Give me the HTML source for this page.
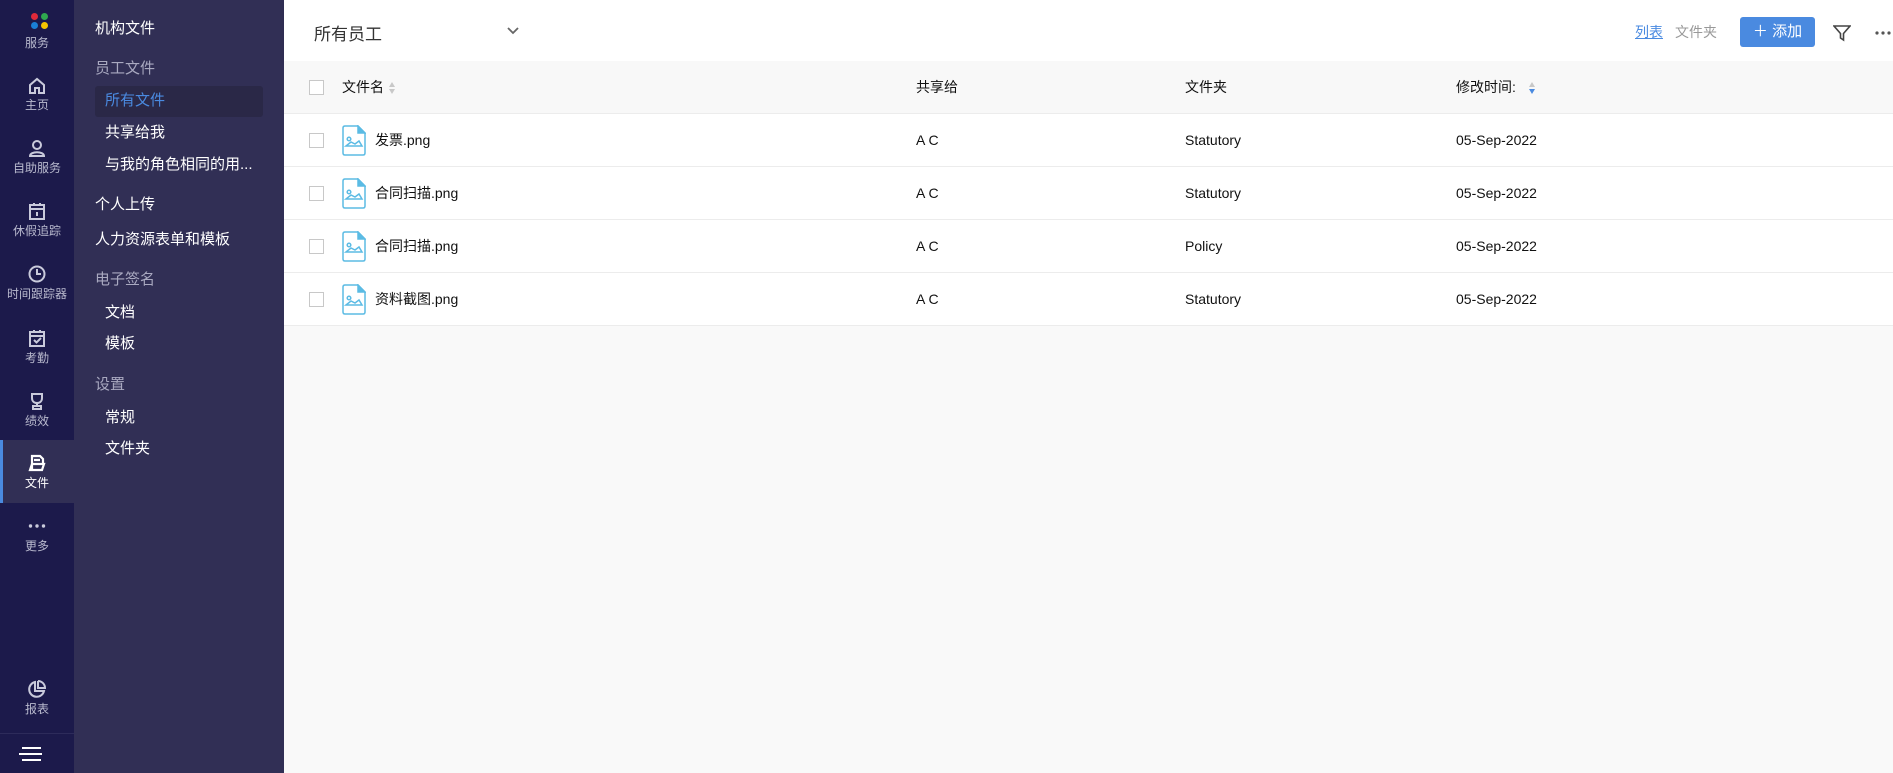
<!DOCTYPE html>
<html><head><meta charset="utf-8"><style>
*{margin:0;padding:0;box-sizing:border-box}
body{width:1893px;height:773px;overflow:hidden;background:#f9f9f9;font-family:"Liberation Sans","Noto Sans CJK SC",sans-serif;position:relative}
.rail{position:absolute;left:0;top:0;width:74px;height:773px;background:#1c1a4b}
.sub{position:absolute;left:74px;top:0;width:210px;height:773px;background:#312f55}
.ri{position:absolute;left:0;width:74px;text-align:center;color:#b9bace;font-size:12px}
.ri svg{position:absolute;left:27px}
.ri span{position:absolute;left:0;width:74px;text-align:center}
.s{position:absolute;font-size:15px;color:#fff;white-space:nowrap;line-height:20px}
.s.h{color:#a9a9c0}
.main{position:absolute;left:284px;top:0;right:0;height:773px}
.top{position:absolute;left:0;top:0;right:0;height:61px;background:#fff;box-shadow:0 1px 4px rgba(0,0,0,.1)}
.row{position:absolute;left:0;right:0;height:53px;background:#fff;border-bottom:1px solid #ececec;font-size:14px;color:#111}
.row.hd{background:#f8f8f8}
.c{position:absolute;top:50%;transform:translateY(-50%);white-space:nowrap}
.cb{position:absolute;left:25px;top:19px;width:15px;height:15px;border:1.5px solid #c8c8c8;background:#fff}
.srt{display:inline-block;vertical-align:middle;margin-left:4px}
</style></head><body>
<div class="rail">
  <div style="position:absolute;left:31px;top:13px;width:7px;height:7px;border-radius:50%;background:#e02a3a"></div>
  <div style="position:absolute;left:41px;top:13px;width:7px;height:7px;border-radius:50%;background:#2fa84f"></div>
  <div style="position:absolute;left:31px;top:22px;width:7px;height:7px;border-radius:50%;background:#1a7fd6"></div>
  <div style="position:absolute;left:41px;top:22px;width:7px;height:7px;border-radius:50%;background:#f5c400"></div>
  <div class="ri" style="top:34px"><span>服务</span></div>

  <div class="ri" style="top:76px"><svg width="20" height="20" viewBox="0 0 20 20" fill="none" stroke="#c9cadb" stroke-width="2"><path d="M3 9 L10 3 L17 9 V17 H12 V12 H8 V17 H3 Z"/></svg><span style="top:20px">主页</span></div>
  <div class="ri" style="top:138px"><svg width="20" height="20" viewBox="0 0 20 20" fill="none" stroke="#c9cadb" stroke-width="2"><circle cx="10" cy="7" r="4"/><path d="M3 18 C3 13 17 13 17 18 Z"/></svg><span style="top:21px">自助服务</span></div>
  <div class="ri" style="top:201px"><svg width="20" height="20" viewBox="0 0 20 20" fill="none" stroke="#c9cadb" stroke-width="2"><rect x="3" y="4" width="14" height="14"/><path d="M3 8H17M7 2V5M13 2V5M10 11V15"/></svg><span style="top:21px">休假追踪</span></div>
  <div class="ri" style="top:264px"><svg width="20" height="20" viewBox="0 0 20 20" fill="none" stroke="#c9cadb" stroke-width="2"><circle cx="10" cy="10" r="7.5"/><path d="M10 5V10H14"/></svg><span style="top:21px">时间跟踪器</span></div>
  <div class="ri" style="top:328px"><svg width="20" height="20" viewBox="0 0 20 20" fill="none" stroke="#c9cadb" stroke-width="2"><rect x="3" y="4" width="14" height="14"/><path d="M3 8H17M7 2V5M13 2V5M7 12L9.5 14.5L14 10"/></svg><span style="top:21px">考勤</span></div>
  <div class="ri" style="top:391px"><svg width="20" height="20" viewBox="0 0 20 20" fill="none" stroke="#c9cadb" stroke-width="2"><path d="M5 3H15V7C15 10 13 12 10 12C7 12 5 10 5 7Z M10 12V15 M6 18H14V15H6Z"/></svg><span style="top:21px">绩效</span></div>
  <div style="position:absolute;left:0;top:440px;width:74px;height:63px;background:#312f55;border-left:3px solid #4a8ae0"></div>
  <div class="ri" style="top:453px;color:#fff"><svg width="20" height="20" viewBox="0 0 20 20" fill="none" stroke="#fff" stroke-width="2.2"><path d="M5 17V3H13L16 6V10M3 17H15L17 11H5Z M7 7H13"/></svg><span style="top:21px">文件</span></div>
  <div class="ri" style="top:516px"><svg width="20" height="20" viewBox="0 0 20 20" fill="#c9cadb"><circle cx="3.5" cy="10" r="1.7"/><circle cx="10" cy="10" r="1.7"/><circle cx="16.5" cy="10" r="1.7"/></svg><span style="top:21px">更多</span></div>
  <div class="ri" style="top:679px"><svg width="20" height="20" viewBox="0 0 20 20" fill="none" stroke="#c9cadb" stroke-width="2"><path d="M8 3A7.5 7.5 0 1 0 17 12H8Z M11 2V9H18A7 7 0 0 0 11 2"/></svg><span style="top:21px">报表</span></div>
  <div style="position:absolute;left:0;top:733px;width:74px;height:1px;background:#2d2b5a"></div>
  <div style="position:absolute;left:22px;top:747px;width:19px;height:2px;background:#fff"></div>
  <div style="position:absolute;left:19px;top:753px;width:23px;height:2px;background:#fff"></div>
  <div style="position:absolute;left:22px;top:759px;width:19px;height:2px;background:#fff"></div>
</div>
<div class="sub">
  <div style="position:absolute;left:21px;top:86px;width:168px;height:31px;background:#2a2847;border-radius:3px"></div>
  <div class="s" style="left:21px;top:19px">机构文件</div>
  <div class="s h" style="left:21px;top:59px">员工文件</div>
  <div class="s" style="left:31px;top:91px;color:#4a8ae0">所有文件</div>
  <div class="s" style="left:31px;top:123px">共享给我</div>
  <div class="s" style="left:31px;top:155px">与我的角色相同的用...</div>
  <div class="s" style="left:21px;top:195px">个人上传</div>
  <div class="s" style="left:21px;top:230px">人力资源表单和模板</div>
  <div class="s h" style="left:21px;top:270px">电子签名</div>
  <div class="s" style="left:31px;top:303px">文档</div>
  <div class="s" style="left:31px;top:334px">模板</div>
  <div class="s h" style="left:21px;top:375px">设置</div>
  <div class="s" style="left:31px;top:408px">常规</div>
  <div class="s" style="left:31px;top:439px">文件夹</div>
</div>
<div class="main">
  <div class="top">
    <div style="position:absolute;left:30px;top:20px;font-size:17px;color:#333">所有员工</div>
    <svg style="position:absolute;left:223px;top:27px" width="12" height="8" viewBox="0 0 12 8" fill="none" stroke="#666" stroke-width="1.8"><path d="M1 1L6 6L11 1"/></svg>
    <div style="position:absolute;left:1351px;top:22px;font-size:14px;color:#4a8ae0;text-decoration:underline">列表</div>
    <div style="position:absolute;left:1391px;top:22px;font-size:14px;color:#999">文件夹</div>
    <div style="position:absolute;left:1456px;top:17px;width:75px;height:30px;background:#4a8ae0;border-radius:3px;color:#fff;font-size:15px;line-height:30px;text-align:center">＋ 添加</div>
    <svg style="position:absolute;left:1549px;top:24px" width="18" height="18" viewBox="0 0 18 18" fill="none" stroke="#444" stroke-width="1.6"><path d="M1 2H17L10.5 9.5V16L7.5 14V9.5Z"/></svg>
    <svg style="position:absolute;left:1591px;top:31px" width="18" height="4" viewBox="0 0 18 4" fill="#555"><circle cx="2" cy="2" r="1.6"/><circle cx="8" cy="2" r="1.6"/><circle cx="14" cy="2" r="1.6"/></svg>
  </div>
  <div class="row hd" style="top:61px;height:53px">
    <div class="cb"></div>
    <div class="c" style="left:58px">文件名<svg class="srt" width="8" height="14" viewBox="0 0 8 14"><path d="M4 1L7 6H1Z" fill="#c8c8c8"/><path d="M4 13L7 8H1Z" fill="#c8c8c8"/></svg></div>
    <div class="c" style="left:632px">共享给</div>
    <div class="c" style="left:901px">文件夹</div>
    <div class="c" style="left:1172px">修改时间:<svg class="srt" style="margin-left:12px" width="8" height="14" viewBox="0 0 8 14"><path d="M4 1L7 6H1Z" fill="#c8c8c8"/><path d="M4 13L7 8H1Z" fill="#4a8ae0"/></svg></div>
  </div>
  <div class="row" style="top:114px">
    <div class="cb"></div>
    <svg style="position:absolute;left:58px;top:11px" width="24" height="31" viewBox="0 0 24 31" fill="none" stroke="#5bbbe4" stroke-width="1.5"><path d="M3 1H16L23 8V28Q23 30 21 30H3Q1 30 1 28V3Q1 1 3 1Z"/><path d="M16 1V8H23Z" fill="#5bbbe4"/><circle cx="7" cy="14" r="1.8"/><path d="M4 21L9 17L13 19L17 16L20 21Z"/></svg>
    <div class="c" style="left:91px">发票.png</div>
    <div class="c" style="left:632px">A C</div><div class="c" style="left:901px">Statutory</div><div class="c" style="left:1172px">05-Sep-2022</div>
  </div>
  <div class="row" style="top:167px">
    <div class="cb"></div>
    <svg style="position:absolute;left:58px;top:11px" width="24" height="31" viewBox="0 0 24 31" fill="none" stroke="#5bbbe4" stroke-width="1.5"><path d="M3 1H16L23 8V28Q23 30 21 30H3Q1 30 1 28V3Q1 1 3 1Z"/><path d="M16 1V8H23Z" fill="#5bbbe4"/><circle cx="7" cy="14" r="1.8"/><path d="M4 21L9 17L13 19L17 16L20 21Z"/></svg>
    <div class="c" style="left:91px">合同扫描.png</div>
    <div class="c" style="left:632px">A C</div><div class="c" style="left:901px">Statutory</div><div class="c" style="left:1172px">05-Sep-2022</div>
  </div>
  <div class="row" style="top:220px">
    <div class="cb"></div>
    <svg style="position:absolute;left:58px;top:11px" width="24" height="31" viewBox="0 0 24 31" fill="none" stroke="#5bbbe4" stroke-width="1.5"><path d="M3 1H16L23 8V28Q23 30 21 30H3Q1 30 1 28V3Q1 1 3 1Z"/><path d="M16 1V8H23Z" fill="#5bbbe4"/><circle cx="7" cy="14" r="1.8"/><path d="M4 21L9 17L13 19L17 16L20 21Z"/></svg>
    <div class="c" style="left:91px">合同扫描.png</div>
    <div class="c" style="left:632px">A C</div><div class="c" style="left:901px">Policy</div><div class="c" style="left:1172px">05-Sep-2022</div>
  </div>
  <div class="row" style="top:273px">
    <div class="cb"></div>
    <svg style="position:absolute;left:58px;top:11px" width="24" height="31" viewBox="0 0 24 31" fill="none" stroke="#5bbbe4" stroke-width="1.5"><path d="M3 1H16L23 8V28Q23 30 21 30H3Q1 30 1 28V3Q1 1 3 1Z"/><path d="M16 1V8H23Z" fill="#5bbbe4"/><circle cx="7" cy="14" r="1.8"/><path d="M4 21L9 17L13 19L17 16L20 21Z"/></svg>
    <div class="c" style="left:91px">资料截图.png</div>
    <div class="c" style="left:632px">A C</div><div class="c" style="left:901px">Statutory</div><div class="c" style="left:1172px">05-Sep-2022</div>
  </div>
</div>
</body></html>
